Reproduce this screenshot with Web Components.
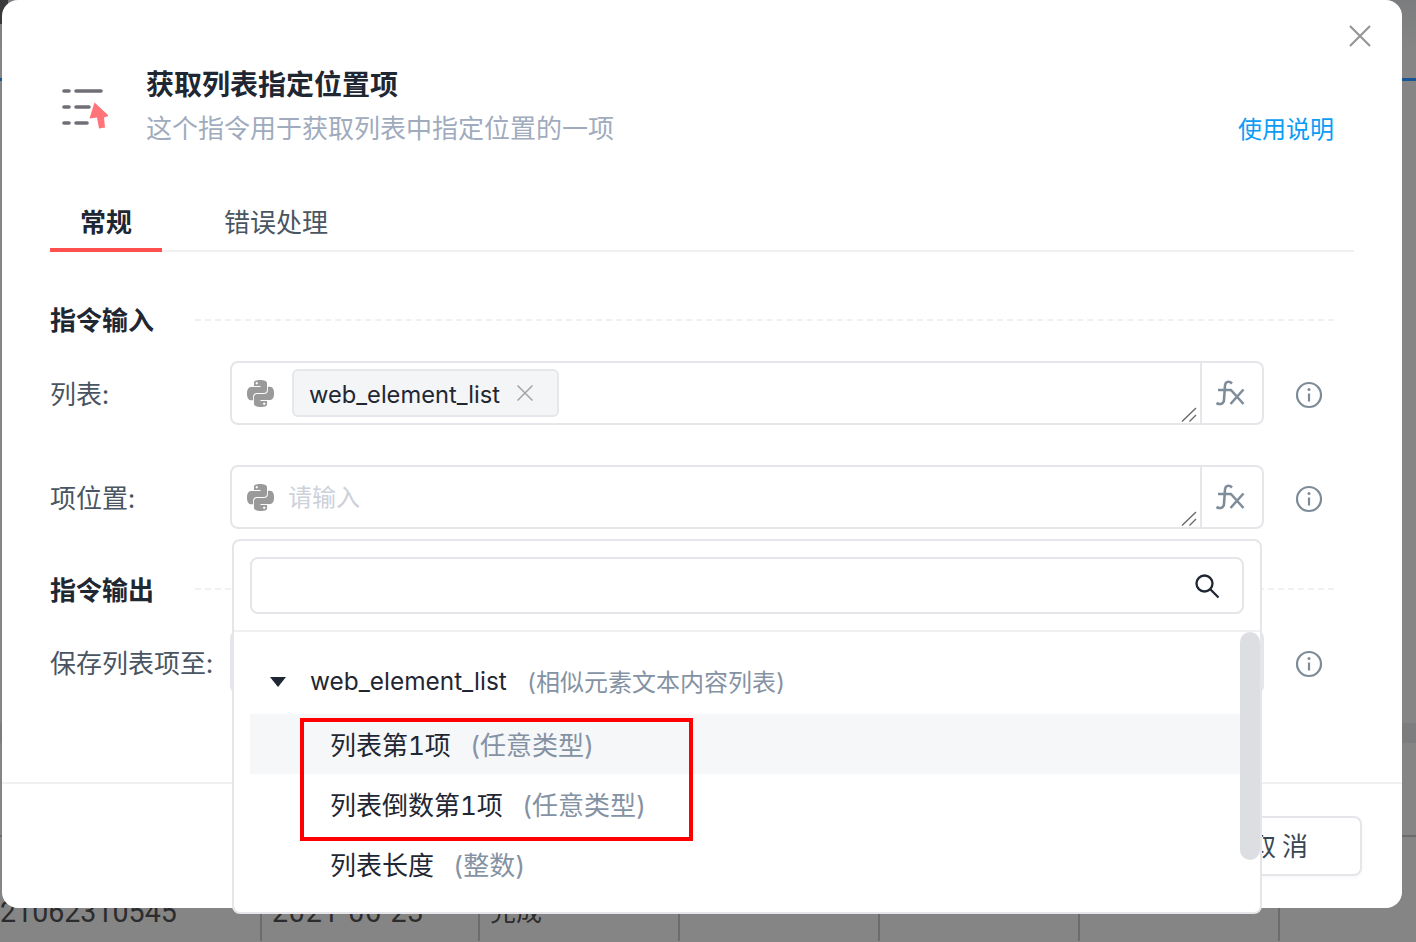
<!DOCTYPE html>
<html lang="zh">
<head>
<meta charset="utf-8">
<title>获取列表指定位置项</title>
<style>
html,body{margin:0;padding:0;width:1416px;height:942px;overflow:hidden;background:#858585;
font-family:Inter,"Noto Sans CJK SC",sans-serif;color:#1f2733;font-variant-numeric:tabular-nums}
</style>
</head>
<body>
<app-page>
  <run-dialog>
    <dialog-header slot="header" title-text="获取列表指定位置项" sub-text="这个指令用于获取列表中指定位置的一项" help="使用说明"></dialog-header>
    <tab-bar slot="tabs" active="常规" other="错误处理"></tab-bar>

    <form-section title-text="指令输入">
      <form-row label="列表:">
        <code-input><var-chip>web_element_list</var-chip></code-input>
      </form-row>
      <form-row label="项位置:">
        <code-input placeholder="请输入"></code-input>
      </form-row>
    </form-section>
    <form-section title-text="指令输出" class="second">
      <form-row label="保存列表项至:">
        <code-input></code-input>
      </form-row>
    </form-section>

    <var-dropdown slot="overlay">
      <tree-row kind="parent" sub="(相似元素文本内容列表)">web_element_list</tree-row>
      <tree-row kind="child" hover sub="(任意类型)">列表第1项</tree-row>
      <tree-row kind="child" sub="(任意类型)">列表倒数第1项</tree-row>
      <tree-row kind="child" sub="(整数)">列表长度</tree-row>
    </var-dropdown>

    <cancel-button slot="footer">取消</cancel-button>
  </run-dialog>
</app-page>

<script>
const PY='M14.25.18l.9.2.73.26.59.3.45.32.34.34.25.34.16.33.1.3.04.26.02.2-.01.13V8.5l-.05.63-.13.55-.21.46-.26.38-.3.31-.33.25-.35.19-.35.14-.33.1-.3.07-.26.04-.21.02H8.77l-.69.05-.59.14-.5.22-.41.27-.33.32-.27.35-.2.36-.15.37-.1.35-.07.32-.04.27-.02.21v3.06H3.17l-.21-.03-.28-.07-.32-.12-.35-.18-.36-.26-.36-.36-.35-.46-.32-.59-.28-.73-.21-.88-.14-1.05-.05-1.23.06-1.22.16-1.04.24-.87.32-.71.36-.57.4-.44.42-.33.42-.24.4-.16.36-.1.32-.05.24-.01h.16l.06.01h8.16v-.83H6.18l-.01-2.75-.02-.37.05-.34.11-.31.17-.28.25-.26.31-.23.38-.2.44-.18.51-.15.58-.12.64-.1.71-.06.77-.04.84-.02 1.27.05zm-6.3 1.98l-.23.33-.08.41.08.41.23.34.33.22.41.09.41-.09.33-.22.23-.34.08-.41-.08-.41-.23-.33-.33-.22-.41-.09-.41.09zm13.09 3.95l.28.06.32.12.35.18.36.27.36.35.35.47.32.59.28.73.21.88.14 1.04.05 1.23-.06 1.23-.16 1.04-.24.86-.32.71-.36.57-.4.45-.42.33-.42.24-.4.16-.36.09-.32.05-.24.02-.16-.01h-8.22v.82h5.84l.01 2.76.02.36-.05.34-.11.31-.17.29-.25.25-.31.24-.38.2-.44.17-.51.15-.58.13-.64.09-.71.07-.77.04-.84.01-1.27-.04-1.07-.14-.9-.2-.73-.25-.59-.3-.45-.33-.34-.34-.25-.34-.16-.33-.1-.3-.04-.25-.02-.2.01-.13v-5.34l.05-.64.13-.54.21-.46.26-.38.3-.32.33-.24.35-.2.35-.14.33-.1.3-.06.26-.04.21-.02.13-.01h5.84l.69-.05.59-.14.5-.21.41-.28.33-.32.27-.35.2-.36.15-.36.1-.35.07-.32.04-.28.02-.21V6.07h2.09l.14.01zm-6.47 14.25l-.23.33-.08.41.08.41.23.33.33.23.41.08.41-.08.33-.23.23-.33.08-.41-.08-.41-.23-.33-.33-.23-.41-.08-.41.08z';

function def(name, build){
  customElements.define(name, class extends HTMLElement{
    constructor(){super();this.attachShadow({mode:'open'});}
    connectedCallback(){ this.shadowRoot.innerHTML = build(this); }
  });
}

def('app-page', ()=>`<style>
:host{display:block;position:relative;width:1416px;height:942px;overflow:hidden;background:linear-gradient(180deg,#7b7c7d 0,#858585 50px,#858585 100%)}
.corner{width:8px;height:24px;background:#3a3a3c}
.blue{height:3px;margin-top:54px;background:#1a5596}
.band{height:20px;margin-top:642px;background:#7c7d7f}
.rows{margin-top:92px;border-top:2px solid #6c6c6c;display:grid;grid-template-columns:262px 218px 200px 200px 200px 200px 136px;height:104px}
.rows div{border-right:2px solid #6c6c6c;box-sizing:border-box;padding-top:57px;font:28.6px/36px Roboto,"Noto Sans CJK SC",sans-serif;color:#2c2c2c;white-space:nowrap;padding-left:10px}
.rows div:first-child{padding-left:0}
.rows .d{letter-spacing:.8px}
.rows .w{font-size:26px}
.rows div:last-child{border-right:0}
.dlg{position:absolute;left:2px;top:0}
</style>
<div class="corner"></div><div class="blue"></div>
<div class="band"></div>
<div class="rows"><div>21062310545</div><div class="d">2021-06-23</div><div class="w">完成</div><div></div><div></div><div></div><div></div></div>
<div class="dlg"><slot></slot></div>`);

def('run-dialog', ()=>`<style>
:host{display:flex;flex-direction:column;position:relative;width:1400px;height:908px;background:#fff;border-radius:16px;box-sizing:border-box}
.x{position:absolute;left:1347px;top:25px;width:22px;height:22px}
.tabs,.body{padding:0 48px}
.body{flex:1;min-height:0}
.foot{border-top:2px solid #f0f0f2;padding:32px 40px 32px 0;display:flex;justify-content:flex-end}
.over{position:absolute;left:230px;top:539px}
</style>
<svg class="x" viewBox="0 0 22 22"><path d="M1 1l20 20M21 1L1 21" stroke="#969696" stroke-width="2.200" fill="none"/></svg>
<slot name="header"></slot>
<div class="tabs"><slot name="tabs"></slot></div>
<div class="body"><slot></slot></div>
<div class="foot"><slot name="footer"></slot></div>
<div class="over"><slot name="overlay"></slot></div>`);

def('dialog-header', el=>`<style>
:host{display:flex;align-items:flex-start;height:192px;box-sizing:border-box;padding:67px 68px 0 58px}
svg{width:48px;height:44px;margin-top:19px;flex:none;filter:blur(.7px)}
.text{margin-left:38px;flex:1}
.t{font-size:28px;font-weight:700;line-height:36px;color:#1f2733}
.s{font-size:26px;line-height:36px;margin-top:8px;color:#a0abbd}
.h{font-size:24px;line-height:36px;margin-top:45px;color:#0c9cf5}
</style>
<svg viewBox="60 86 48 44"><g stroke="#6f6f77" stroke-width="3.600" fill="none" stroke-linecap="round">
<path d="M64 91h5M76 91h25M64 107h5M76 107h13M64 123h5M76 123h11"/></g>
<path d="M94.500 102.500L109 116l-5 1.500 1 10-6 1-2-11-7.500 1z" fill="#ff7478"/></svg>
<div class="text"><div class="t">${el.getAttribute('title-text')}</div><div class="s">${el.getAttribute('sub-text')}</div></div>
<div class="h">${el.getAttribute('help')}</div>`);

def('tab-bar', el=>`<style>
:host{display:flex;height:60px;box-sizing:border-box;border-bottom:2px solid #f0f0f2;padding-top:12px}
.tab{font-size:26px;line-height:37px;height:48px;box-sizing:border-box;padding:0 30px}
.on{font-weight:700;color:#1f2733;border-bottom:4px solid #ff5050;width:112px;text-align:center;padding:0;height:48px}
.off{color:#4a5562;margin-left:32px}
</style><div class="tab on">${el.getAttribute('active')}</div><div class="tab off">${el.getAttribute('other')}</div>`);

def('form-section', el=>`<style>
:host{display:block;padding-top:50px}
:host(.second){padding-top:43px}
.h{display:flex;align-items:center;height:36px;padding-right:20px;margin-bottom:23px}
.h b{font-size:26px;line-height:36px;padding-top:2px;font-weight:700;color:#1f2733}
.h i{flex:1;margin-left:41px;border-top:2px dashed #f0f0f2}
.rows{display:flex;flex-direction:column;gap:40px}
:host(.second) .h{margin-bottom:22px}
:host(.second) .h i{position:relative;top:-1px}
</style><div class="h"><b>${el.getAttribute('title-text')}</b><i></i></div><div class="rows"><slot></slot></div>`);

def('form-row', el=>`<style>
:host{display:flex;align-items:center;height:64px}
label{width:180px;flex:none;font-size:26px;line-height:36px;padding-top:4px;color:#4a5562;white-space:nowrap}
.f{flex:1;min-width:0}
.i{width:90px;flex:none;display:flex;justify-content:center;padding-top:4px}
svg{width:28px;height:28px;display:block}
</style><label>${el.getAttribute('label')}</label><div class="f"><slot></slot></div>
<div class="i"><svg viewBox="0 0 28 28"><circle cx="14" cy="14" r="12" fill="none" stroke="#7c8b98" stroke-width="2.200"/><path d="M14 12.500v8" stroke="#7c8b98" stroke-width="2.200"/><circle cx="14" cy="8.500" r="1.500" fill="#7c8b98"/></svg></div>`);

def('code-input', el=>`<style>
:host{display:flex;height:64px;box-sizing:border-box;border:2px solid #e6e6ea;border-radius:8px;background:#fff}
.m{flex:1;display:flex;align-items:center;padding-left:15px;position:relative;min-width:0}
.py{width:27px;height:27px;flex:none;margin-right:18px}
.ph{font-size:24px;color:#ccd1da;margin-left:-4px;padding-bottom:4px}
.rz{position:absolute;right:3px;bottom:1px;width:16px;height:15px}
.fx{width:62px;flex:none;border-left:2px solid #e6e6ea;display:flex;align-items:center;justify-content:center;padding-right:4px;box-sizing:border-box}
.fx svg{width:30px;height:26px}
</style>
<div class="m"><svg class="py" viewBox="0 0 24 24"><path fill="#9a9a9a" d="${PY}"/></svg>
${el.hasAttribute('placeholder')?`<span class="ph">${el.getAttribute('placeholder')}</span>`:''}<slot></slot>
<svg class="rz" viewBox="0 0 16 15"><path d="M1 14.500L15 1M8.500 14.500L15 8" stroke="#666" stroke-width="1.300" fill="none"/></svg></div>
<div class="fx"><svg viewBox="0 0 30 26"><path d="M17 3.500C14 .5 10.500 1.500 10 5.500L9 20c-.3 4-4 5-7.500 3M3 10h13" fill="none" stroke="#7f8c9a" stroke-width="2.600"/><path d="M15.500 9.500L28.500 24M28.500 9.500L15.500 24" fill="none" stroke="#7f8c9a" stroke-width="2.600"/></svg></div>`);

def('var-chip', ()=>`<style>
:host{display:inline-flex;align-items:center;height:48px;box-sizing:border-box;padding:0 24px 0 15px;border:2px solid #e6e7eb;border-radius:6px;background:#f4f5f7;font-size:23.700px;color:#1f2733;white-space:nowrap}
span{padding-top:2px}
svg{width:16px;height:16px;margin-left:16.500px}
</style><span><slot></slot></span><svg viewBox="0 0 16 16"><path d="M.5.5l15 15M15.500.5l-15 15" stroke="#a3a3a3" stroke-width="1.500" fill="none"/></svg>`);

def('var-dropdown', ()=>`<style>
:host{display:block;position:relative;box-sizing:border-box;width:1030px;height:375px;background:#fff;border:2px solid #e6e6ea;border-radius:8px;overflow:hidden}
.top{padding:16px 16px 16px;border-bottom:2px solid #f0f0f2}
.s{height:57px;box-sizing:border-box;border:2px solid #e6e6ea;border-radius:8px;display:flex;align-items:center;justify-content:flex-end;padding-right:22px}
.s svg{width:26px;height:26px}
.list{padding:20px 20px 0 16px}
.bar{position:absolute;right:0;top:91px;width:20px;height:228px;border-radius:10px;background:#dddee2}
.mark{position:absolute;left:66px;top:177px;width:393px;height:123px;box-sizing:border-box;border:4px solid #f00}
</style>
<div class="top"><div class="s"><svg viewBox="0 0 26 26"><circle cx="10.500" cy="10.500" r="8" fill="none" stroke="#1f2733" stroke-width="2.300"/><path d="M16.500 16.500l8 8" stroke="#1f2733" stroke-width="2.300"/></svg></div></div>
<div class="list"><slot></slot></div>
<div class="bar"></div><div class="mark"></div>`);

def('tree-row', el=>{
  const p=el.getAttribute('kind')==='parent';
  return `<style>
:host{display:flex;align-items:center;height:60px;font-size:${p?24.4:26}px;color:#1f2733;white-space:nowrap;padding-left:${p?20:80}px;padding-bottom:2px;box-sizing:border-box;${el.hasAttribute('hover')?'background:#f6f7f9;':''}${p?'margin-bottom:2px;':''}}
.tri{width:0;height:0;border:8.500px solid transparent;border-top:10px solid #1f2733;border-bottom:0;margin-right:24px;position:relative;top:1px}
.sub{color:#8592a3;margin-left:${p?20:19}px;font-size:${p?24:26}px;${p?'padding-bottom:2px;':''}}
</style>${p?'<span class="tri"></span>':''}<slot></slot><span class="sub">${el.getAttribute('sub')}</span>`;
});

def('cancel-button', ()=>`<style>
:host{display:flex;align-items:center;justify-content:center;width:160px;height:60px;box-sizing:border-box;padding-bottom:4px;border:2px solid #e6e6ea;border-radius:8px;background:#fff;font-size:26px;letter-spacing:6px;color:#3c4652;box-shadow:0 2px 4px rgba(0,0,0,.03)}
</style><slot></slot>`);
</script>
</body>
</html>
